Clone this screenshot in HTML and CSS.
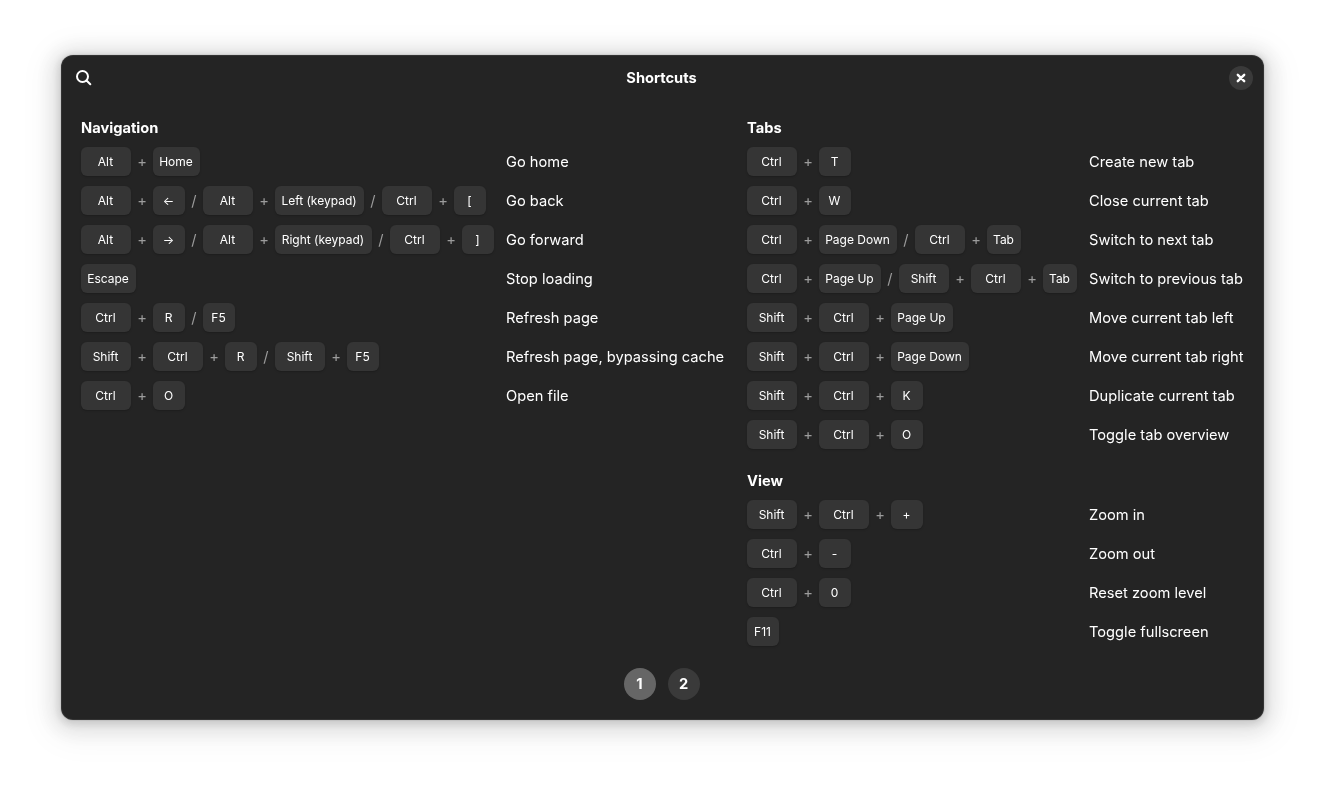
FILE: index.html
```html
<!DOCTYPE html>
<html lang="en">
<head>
<meta charset="utf-8">
<title>Shortcuts</title>
<link rel="stylesheet" href="styles.css">
</head>
<body>
<main class="window">
  <header class="headerbar">
    <button class="search" aria-label="Search"><svg width="16" height="16" viewBox="0 0 16 16"><circle cx="6.5" cy="6.5" r="5.5" fill="none" stroke="#fff" stroke-width="2"/><path d="M10.5 10.5 14.3 14.3" stroke="#fff" stroke-width="2" stroke-linecap="round"/></svg></button>
    <h1 class="title">Shortcuts</h1>
    <button class="close" aria-label="Close"><svg width="16" height="16" viewBox="0 0 16 16"><path d="M4.8 4.8 11.2 11.2M11.2 4.8 4.8 11.2" stroke="#fff" stroke-width="2.4" stroke-linecap="round"/></svg></button>
  </header>
  <div class="columns">
    <div class="column column-left">
      <section class="group">
        <h2 class="heading">Navigation</h2>
        <div class="row"><div class="keys"><kbd class="mod">Alt</kbd><i class="plus">+</i><kbd class="w-home">Home</kbd></div><span class="label">Go home</span></div>
        <div class="row"><div class="keys"><kbd class="mod">Alt</kbd><i class="plus">+</i><kbd>←</kbd><i class="slash">/</i><kbd class="mod">Alt</kbd><i class="plus">+</i><kbd class="w-left">Left (keypad)</kbd><i class="slash">/</i><kbd class="mod">Ctrl</kbd><i class="plus">+</i><kbd>[</kbd></div><span class="label">Go back</span></div>
        <div class="row"><div class="keys"><kbd class="mod">Alt</kbd><i class="plus">+</i><kbd>→</kbd><i class="slash">/</i><kbd class="mod">Alt</kbd><i class="plus">+</i><kbd class="w-right">Right (keypad)</kbd><i class="slash">/</i><kbd class="mod">Ctrl</kbd><i class="plus">+</i><kbd>]</kbd></div><span class="label">Go forward</span></div>
        <div class="row"><div class="keys"><kbd class="w-escape">Escape</kbd></div><span class="label">Stop loading</span></div>
        <div class="row"><div class="keys"><kbd class="mod">Ctrl</kbd><i class="plus">+</i><kbd>R</kbd><i class="slash">/</i><kbd>F5</kbd></div><span class="label">Refresh page</span></div>
        <div class="row"><div class="keys"><kbd class="mod">Shift</kbd><i class="plus">+</i><kbd class="mod">Ctrl</kbd><i class="plus">+</i><kbd>R</kbd><i class="slash">/</i><kbd class="mod">Shift</kbd><i class="plus">+</i><kbd>F5</kbd></div><span class="label">Refresh page, bypassing cache</span></div>
        <div class="row"><div class="keys"><kbd class="mod">Ctrl</kbd><i class="plus">+</i><kbd>O</kbd></div><span class="label">Open file</span></div>
      </section>
    </div>
    <div class="column column-right">
      <section class="group">
        <h2 class="heading">Tabs</h2>
        <div class="row"><div class="keys"><kbd class="mod">Ctrl</kbd><i class="plus">+</i><kbd>T</kbd></div><span class="label">Create new tab</span></div>
        <div class="row"><div class="keys"><kbd class="mod">Ctrl</kbd><i class="plus">+</i><kbd>W</kbd></div><span class="label">Close current tab</span></div>
        <div class="row"><div class="keys"><kbd class="mod">Ctrl</kbd><i class="plus">+</i><kbd class="w-pgdn">Page Down</kbd><i class="slash">/</i><kbd class="mod">Ctrl</kbd><i class="plus">+</i><kbd class="w-tab">Tab</kbd></div><span class="label">Switch to next tab</span></div>
        <div class="row"><div class="keys"><kbd class="mod">Ctrl</kbd><i class="plus">+</i><kbd class="w-pgup">Page Up</kbd><i class="slash">/</i><kbd class="mod">Shift</kbd><i class="plus">+</i><kbd class="mod">Ctrl</kbd><i class="plus">+</i><kbd class="w-tab">Tab</kbd></div><span class="label">Switch to previous tab</span></div>
        <div class="row"><div class="keys"><kbd class="mod">Shift</kbd><i class="plus">+</i><kbd class="mod">Ctrl</kbd><i class="plus">+</i><kbd class="w-pgup">Page Up</kbd></div><span class="label">Move current tab left</span></div>
        <div class="row"><div class="keys"><kbd class="mod">Shift</kbd><i class="plus">+</i><kbd class="mod">Ctrl</kbd><i class="plus">+</i><kbd class="w-pgdn">Page Down</kbd></div><span class="label">Move current tab right</span></div>
        <div class="row"><div class="keys"><kbd class="mod">Shift</kbd><i class="plus">+</i><kbd class="mod">Ctrl</kbd><i class="plus">+</i><kbd>K</kbd></div><span class="label">Duplicate current tab</span></div>
        <div class="row"><div class="keys"><kbd class="mod">Shift</kbd><i class="plus">+</i><kbd class="mod">Ctrl</kbd><i class="plus">+</i><kbd>O</kbd></div><span class="label">Toggle tab overview</span></div>
      </section>
      <section class="group">
        <h2 class="heading">View</h2>
        <div class="row"><div class="keys"><kbd class="mod">Shift</kbd><i class="plus">+</i><kbd class="mod">Ctrl</kbd><i class="plus">+</i><kbd>+</kbd></div><span class="label">Zoom in</span></div>
        <div class="row"><div class="keys"><kbd class="mod">Ctrl</kbd><i class="plus">+</i><kbd>-</kbd></div><span class="label">Zoom out</span></div>
        <div class="row"><div class="keys"><kbd class="mod">Ctrl</kbd><i class="plus">+</i><kbd>0</kbd></div><span class="label">Reset zoom level</span></div>
        <div class="row"><div class="keys"><kbd>F11</kbd></div><span class="label">Toggle fullscreen</span></div>
      </section>
    </div>
  </div>
  <nav class="pager"><button class="page current">1</button><button class="page">2</button></nav>
</main>
</body>
</html>
```
FILE: styles.css
```css
* { box-sizing: border-box; }
body {
  margin: 0;
  height: 787px;
  padding: 55px 61px 67px;
  overflow: hidden;
  background: #fff;
  color: #fff;
  font: 14.667px/19px Inter, "Noto Sans", sans-serif;
}
.window {
  display: flex;
  flex-direction: column;
  height: 665px;
  border-radius: 12px;
  background: #242424;
  will-change: transform;
  box-shadow: inset 0 0 0 1px rgba(255, 255, 255, .07),
    0 0 0 1px rgba(0, 0, 0, .05),
    0 2px 8px 2px rgba(0, 0, 0, .13),
    0 3px 20px 10px rgba(0, 0, 0, .09),
    0 6px 32px 16px rgba(0, 0, 0, .04);
}
.headerbar {
  display: flex;
  align-items: center;
  justify-content: space-between;
  height: 46px;
  padding: 0 11px 0 15px;
}
button {
  display: flex;
  align-items: center;
  justify-content: center;
  padding: 0;
  border: 0;
  background: none;
  color: inherit;
  font: inherit;
}
.search { width: 24px; height: 16px; justify-content: flex-start; }
.close { width: 24px; height: 24px; border-radius: 50%; background: #3a3a3a; }
.title { margin: 0; padding-right: 6px; font-size: 14.667px; font-weight: 700; }
.columns { display: flex; flex: 1; padding: 18px 20px 0; }
.column { display: flex; flex-direction: column; gap: 23px; }
.column-left { width: 666px; }
.column-right { flex: 1; }
.group { display: flex; flex-direction: column; gap: 10px; }
.heading { height: 18px; margin: 0; font-size: 14.667px; line-height: 19px; font-weight: 700; }
.row { display: flex; align-items: center; height: 29px; }
.keys { display: flex; align-items: center; gap: 6px; flex: none; }
.column-left .keys { width: 425px; }
.column-right .keys { width: 342px; }
.label { padding-top: 2px; white-space: nowrap; }
kbd {
  flex: none;
  width: 32px;
  height: 29px;
  padding-right: 1px;
  border-radius: 6px;
  background: #353535;
  box-shadow: 0 1px 2px rgba(0, 0, 0, .22);
  font: 12px/29px Inter, "Noto Sans", sans-serif;
  text-align: center;
  white-space: nowrap;
}
.mod { width: 50px; }
.w-home { width: 47px; }
.w-left { width: 89px; }
.w-right { width: 97px; }
.w-escape { width: 55px; }
.w-pgdn { width: 78px; }
.w-pgup { width: 62px; }
.w-tab { width: 34px; }
.plus, .slash { flex: none; text-align: center; font-style: normal; color: #9c9c9c; }
.plus { width: 10px; padding-top: 1px; }
.slash { width: 6px; padding-top: 1px; }
.pager { display: flex; justify-content: center; gap: 12px; height: 52px; padding-right: 1px; }
.page { width: 32px; height: 32px; padding-right: 1px; border-radius: 50%; background: #3a3a3a; font-weight: 700; }
.current { background: #666; }
```
